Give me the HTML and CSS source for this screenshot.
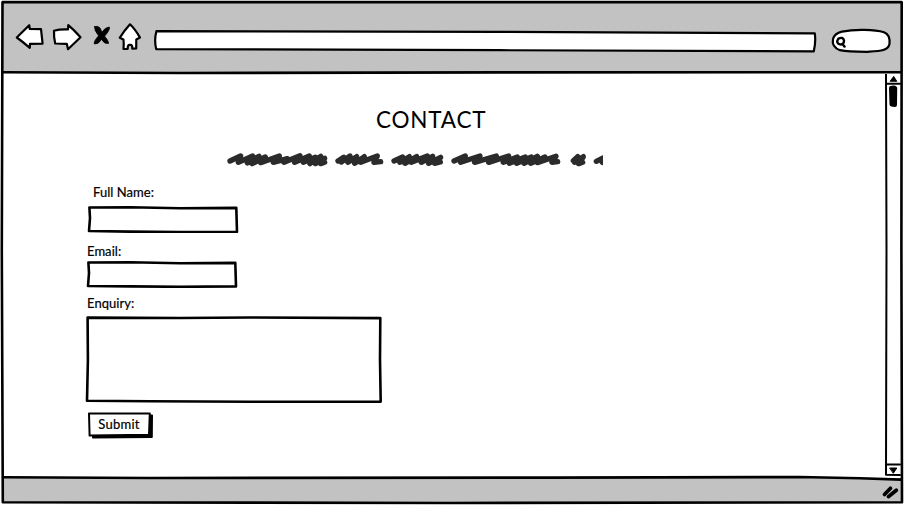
FILE: index.html
```html
<!DOCTYPE html>
<html lang="en">
<head>
<meta charset="utf-8">
<title>Contact</title>
<link rel="stylesheet" href="styles.css">
</head>
<body>
<div class="window">
  <header class="toolbar">
    <svg class="ink back" viewBox="14 22 32 30"><path d="M16.8 37.5L29.2 25.2 29.8 29 41 29.2 42.6 43.6 30 43.8 29.8 47.8Q23 42 16.8 37.5Z"/></svg>
    <svg class="ink forward" viewBox="51 22 32 30"><path d="M54 30.7Q60 29 68 29.4L68.3 25.2Q74 30 80.5 37.3L68 49.2 66.8 43.8 55.2 43.5Q53.7 37 54 30.7Z"/></svg>
    <svg class="stop" viewBox="91 24 22 24"><path d="M94.6 26.6Q98 25.4 100 28L102 32.2Q105 27.2 109.4 27Q110.4 29.5 104.6 36.2Q108.4 40.4 108.6 43.4Q104.6 44.4 101.4 39.4Q98.4 44.6 94.4 44Q93.4 41.6 98.6 35.8Q94 30.2 94.6 26.6Z"/></svg>
    <svg class="ink home" viewBox="117 21 26 31"><path d="M130 24.3Q135 29 140 37.6L136.3 39.5 136.2 48.4 132.3 48.6Q132.5 44.5 130 44.8 127.5 44.5 127.7 48.8L123.5 49Q124 43 123.4 39.4L119.7 37.8Q124 31 130 24.3Z"/></svg>
    <svg class="ink address" viewBox="152 27 666 27"><path d="M156.4 31.2L500 31.8 814.8 33.3Q816 42 813.8 51.3L500 50.2 156.2 49.1Q154 40 156.4 31.2Z"/></svg>
    <svg class="ink search" viewBox="830 27 62 28"><path d="M842 31.6C855 29 875 29.6 884 32.2C889 34 890 39 889.5 44C888 51 880 51 867 51.8C856 51.8 846 51.5 840 50.2C834 48 832 44 833 39C834 35 838 32.6 842 31.6Z"/><path class="lens" d="M838.2 38.8Q843.2 36.4 844 40.4 844 45 840 44.4 835.6 43 838.2 38.8M842.4 44L844.6 46.6"/></svg>
  </header>
  <div class="body">
    <main class="page">
      <h1 class="title">CONTACT</h1>
      <svg class="scribble" viewBox="18 150 1131 54">
        <path d="M30 183L62 168 55 187 98 168 82 189 117 169 96 191 136 171 122 188 178 168 160 187 202 176 192 187 240 167 224 187 268 168 250 187 286 172 270 191 302 169 286 191 314 175 302 191 314 187"/>
        <path d="M354 183L371 172 364 186 390 168 384 187 410 170 404 190 433 170 422 187 472 168 462 187 482 185"/>
        <path d="M522 183L548 171 540 187 568 170 555 190 590 170 574 187 622 168 604 187 638 169 626 190 662 172 644 190 661 186"/>
        <path d="M702 183L736 168 722 187 780 168 764 187 829 168 806 187 866 168 850 187 892 171 868 190 916 171 890 190 934 171 912 190 952 169 932 190 975 171 952 188 1008 169 996 187 1013 185"/>
        <path d="M1060 182L1073 170 1064 187 1090 170 1076 191 1088 187"/>
        <path d="M1129 184L1160 168 1147 187"/>
      </svg>
      <form class="form">
        <label class="label name-label" for="name">Full Name:</label>
        <div class="field line name-field">
          <svg class="outline" viewBox="87 205 152 28"><path d="M89.4 207.5L130 207.2 180 208.2 236.3 207.9 237 231.8 180 232 130 231.6 89 231 90 218Z"/></svg>
          <input class="input" id="name" type="text">
        </div>
        <label class="label" for="email">Email:</label>
        <div class="field line email-field">
          <svg class="outline" viewBox="86 260 152 28"><path d="M88.4 262.5L130 262.2 180 263.2 235.3 262.9 236 286.4 180 286.8 130 286.4 88 286 89 273Z"/></svg>
          <input class="input" id="email" type="text">
        </div>
        <label class="label" for="enquiry">Enquiry:</label>
        <div class="field area">
          <svg class="outline" viewBox="85 315 298 89"><path d="M87.6 317.6L180 318 250 317.5 380.3 318.1 380 360 380.7 401.6 250 401.8 150 401.2 87 400.8 87.9 360Z"/></svg>
          <textarea class="input" id="enquiry"></textarea>
        </div>
        <button class="submit" type="button">
          <svg class="outline" viewBox="87 411 68 29"><path class="shadow" d="M93 416L150 415.4 152 415.4 151.8 437 93 437.6Z"/><path d="M89 413.4L149.8 413.4 149 434.8 89.6 435.6Z"/></svg>
          <span class="submit-text">Submit</span>
        </button>
      </form>
    </main>
    <svg class="scrollbar" viewBox="884 74 17 402"><path class="rail" d="M886 74L886.5 250 886 474.7 900 475M886 83.8H900M886 464.5H900"/><path class="solid" d="M890.4 81L893.7 76.4 896.6 81ZM890 468L896.8 468 893.5 473Z"/><path class="thumb" d="M891 88Q894 87 895.2 88.2L895 105 891.5 104.5Z"/></svg>
  </div>
  <footer class="status">
    <svg class="grip" viewBox="881 484 20 16"><path d="M884.5 494.5L890.5 488.3M888.5 496.6L896.3 490.2"/></svg>
  </footer>
  <svg class="frame" viewBox="0 0 904 505"><path d="M2.5 2.3L500 2.2 901.7 2.2 901.4 250 902 502.3 450 503 2.8 502.2 1.8 250Z"/><path d="M3 72.3L180 73 500 72.4 901 72.2M3 477.2L150 478 550 477.6 800 477 860 478.3 901 479.6"/></svg>
</div>
</body>
</html>
```
FILE: styles.css
```css
* { box-sizing: border-box; }
body {
  margin: 0;
  background: #fff;
  color: #000;
  font-family: Lato, "Open Sans", sans-serif;
}
svg { display: block; flex: none; fill: none; stroke: #000; stroke-linejoin: round; stroke-linecap: round; }
.window {
  position: relative;
  width: 904px;
  height: 505px;
  display: grid;
  grid-template-rows: 72px 406px 25px;
  padding: 0 2px 2px;
  overflow: hidden;
}
.frame { position: absolute; inset: 0; width: 904px; height: 505px; stroke-width: 2.6; pointer-events: none; }
.toolbar { display: flex; align-items: flex-start; padding: 21px 0 0 12px; background: #c2c2c2; }
.ink { fill: #fff; stroke-width: 2.2; }
.back { width: 32px; height: 30px; margin-top: 1px; }
.forward { width: 32px; height: 30px; margin: 1px 8px 0 5px; }
.stop { width: 22px; height: 24px; margin: 3px 4px 0 0; fill: #000; stroke-width: .8; }
.home { width: 26px; height: 31px; }
.address { width: 666px; height: 27px; margin: 6px 12px 0 9px; }
.search { width: 62px; height: 28px; margin-top: 6px; }
.lens { stroke-width: 2.4; }
.body { display: flex; justify-content: space-between; padding-top: 2px; }
.page { width: 860px; padding-top: 32px; }
.title { margin: 0 0 16px 374px; font-size: 22.5px; line-height: 28px; font-weight: 400; letter-spacing: .8px; }
.scribble { width: 377px; height: 18px; margin-left: 224px; stroke: #2b2b2b; stroke-width: 16; }
.form { display: flex; flex-direction: column; align-items: flex-start; padding: 16px 0 0 83px; }
.label { margin-left: 2px; font-size: 13px; line-height: 16px; letter-spacing: .05px; -webkit-text-stroke: .2px #000; }
.name-label { margin: 0 0 5px 8px; }
.field, .submit { display: grid; }
.field > *, .submit > * { grid-area: 1 / 1; }
.line { width: 152px; height: 28px; }
.name-field { margin: 0 0 10px 2px; }
.email-field { margin: 1px 0 7px 1px; }
.area { width: 298px; height: 89px; margin-top: 4px; }
.outline { width: 100%; height: 100%; fill: #fff; stroke-width: 2.6; }
.input { width: 100%; height: 100%; padding: 4px 8px; border: 0; outline: 0; background: none; resize: none; font: inherit; }
.submit { width: 68px; height: 29px; margin: 7px 0 0 2px; padding: 0; border: 0; background: none; color: #000; font: 13px/27px Lato, sans-serif; }
.submit .outline { stroke-width: 2; }
.submit .shadow { fill: #000; }
.submit-text { padding-right: 4px; letter-spacing: .25px; -webkit-text-stroke: .2px #000; }
.scrollbar { width: 17px; height: 402px; margin-right: 1px; stroke-width: 2; }
.solid { fill: #000; stroke-width: 1; }
.thumb { fill: #000; stroke-width: 4; }
.status { display: flex; justify-content: flex-end; padding: 6px 1px 0; background: #c2c2c2; }
.grip { width: 20px; height: 16px; stroke-width: 3.8; }
```
